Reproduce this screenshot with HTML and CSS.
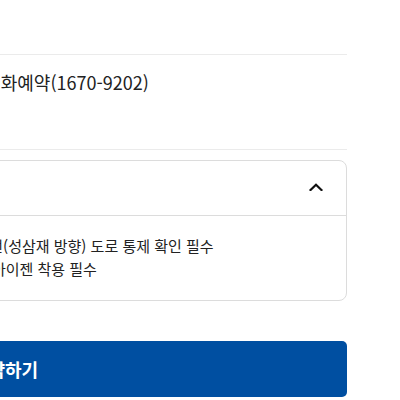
FILE: index.html
```html
<!DOCTYPE html>
<html lang="ko">
<head>
<meta charset="utf-8">
<link rel="stylesheet" href="styles.css">
</head>
<body>
<div class="page">
  <div class="info-row">
    <div class="info-label">예약 방법</div>
    <div class="info-value">사전 전화예약(1670-9202)</div>
  </div>
  <div class="card">
    <div class="card-head">
      <span class="card-title">탐방 유의사항</span>
      <svg class="chev" width="14" height="8" viewBox="0 0 14 8"><polyline points="1.5,7 7,1.8 12.5,7" fill="none" stroke="#111" stroke-width="2.2" stroke-linecap="square"/></svg>
    </div>
    <div class="card-body">
      <p class="note">• 겨울철 기상 악화 시 노고단 방면 지방도 861호선(성삼재 방향) 도로 통제 확인 필수</p>
      <p class="note">• 겨울철 결빙 구간이 많으니 미끄럼 방지를 위해 아이젠 착용 필수</p>
    </div>
  </div>
  <button class="reserve">예약하기</button>
</div>
</body>
</html>
```

FILE: styles.css
```css
html, body {
  margin: 0;
  padding: 0;
  background: #fff;
  overflow: hidden;
}
body {
  font-family: "Noto Sans CJK KR", "Noto Sans", sans-serif;
  color: #222;
}
.page {
  width: 684px;
  margin-left: -337px;
  padding-top: 54px;
}
.info-row {
  display: grid;
  grid-template-columns: 283px 1fr;
  border-top: 1px solid #ebebeb;
  border-bottom: 1px solid #ebebeb;
  padding: 14px 0 0;
  height: 80px;
  font-size: 18px;
  line-height: 26px;
}
.info-label {
  font-weight: 700;
}
.info-value {
  color: #222;
}
.card {
  margin-top: 10px;
  border: 1px solid #dcdcdc;
  border-radius: 8px;
}
.card-head {
  display: flex;
  align-items: center;
  justify-content: space-between;
  height: 54px;
  padding: 0 23px 0 20px;
  border-bottom: 1px solid #dcdcdc;
}
.card-title {
  font-size: 17px;
  font-weight: 700;
}
.chev {
  display: block;
  margin-top: -2px;
}
.card-body {
  padding: 18px 20px 20px 27px;
}
.note {
  margin: 0;
  font-size: 15px;
  line-height: 23px;
  color: #222;
  white-space: nowrap;
}
.reserve {
  display: block;
  width: 100%;
  height: 56px;
  margin-top: 40px;
  border: 0;
  border-radius: 5px;
  background: #004fa1;
  color: #fff;
  font-family: "Noto Sans CJK KR", "Noto Sans", sans-serif;
  font-size: 18px;
  font-weight: 700;
}
```
